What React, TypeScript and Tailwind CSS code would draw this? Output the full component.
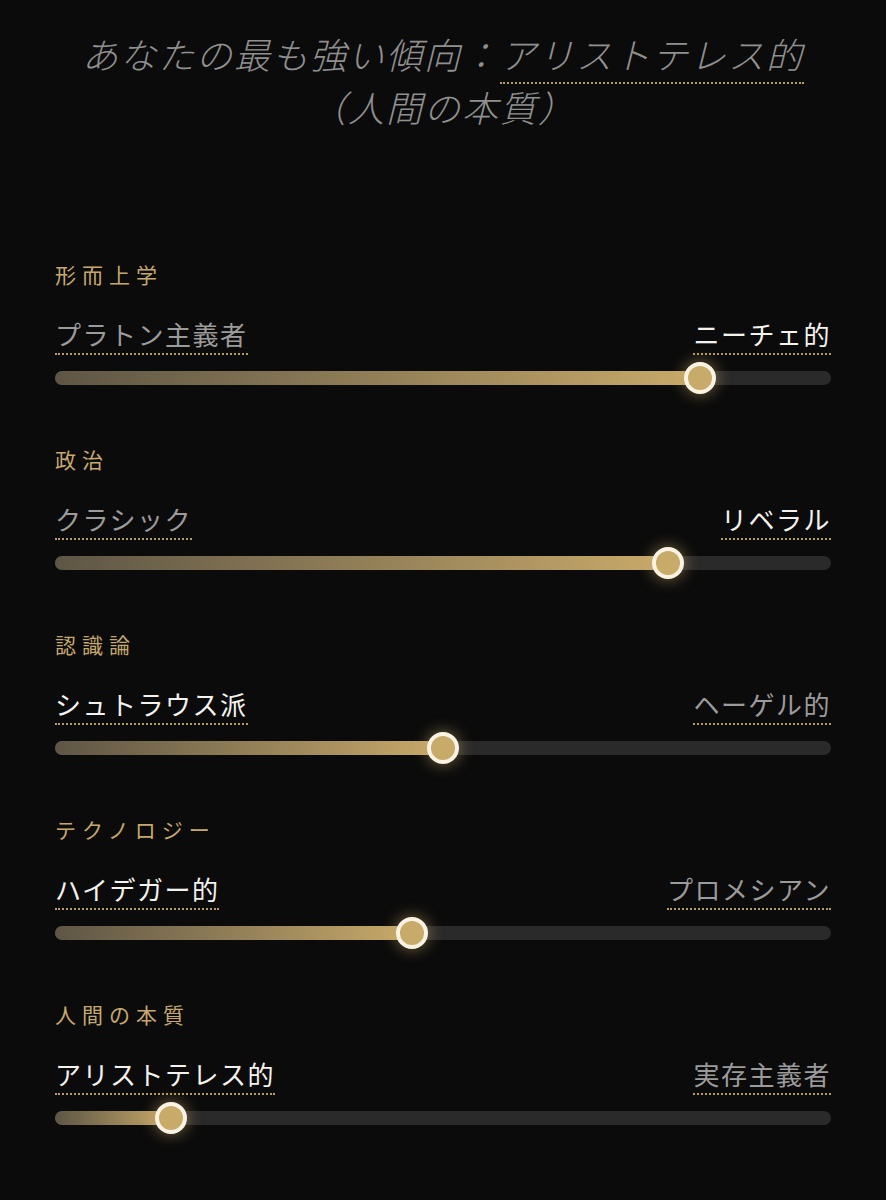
const font = "font-['Noto_Sans_CJK_JP','Noto_Sans',sans-serif]";

type Axis = {
  title: string;
  left: string;
  right: string;
  value: number;
};

const axes: Axis[] = [
  { title: "形而上学", left: "プラトン主義者", right: "ニーチェ的", value: 83.1 },
  { title: "政治", left: "クラシック", right: "リベラル", value: 79 },
  { title: "認識論", left: "シュトラウス派", right: "ヘーゲル的", value: 50 },
  { title: "テクノロジー", left: "ハイデガー的", right: "プロメシアン", value: 46 },
  { title: "人間の本質", left: "アリストテレス的", right: "実存主義者", value: 15 },
];

const Pole = ({ text, active }: { text: string; active: boolean }) => (
  <span
    className={`inline-block text-[26px] leading-[36px] tracking-[1.5px] pb-px border-b-2 border-dotted border-[#b89c63] ${
      active ? "text-[#f4f2ee]" : "text-[#9b9b9b]"
    }`}
  >
    {text}
  </span>
);

const AxisRow = ({ axis }: { axis: Axis }) => {
  // 50% and below leans to the left pole
  const leftActive = axis.value <= 50;
  return (
    <div className="flex flex-col">
      <div className="text-[21px] leading-[28px] tracking-[6px] text-[#c6a86f]">{axis.title}</div>
      <div className="mt-7 flex items-end justify-between">
        <Pole text={axis.left} active={leftActive} />
        <Pole text={axis.right} active={!leftActive} />
      </div>
      <div className="relative mt-4 h-[14px] rounded-full bg-[#2a2a2a]">
        <div
          className="absolute inset-y-0 left-0 rounded-full bg-gradient-to-r from-[#5e5645] to-[#c9aa69]"
          style={{ width: `${axis.value}%` }}
        />
        <div
          className="absolute top-1/2 h-[32px] w-[32px] -translate-x-1/2 -translate-y-1/2 rounded-full border-4 border-[#faf3e4] bg-[#c8aa69] shadow-[0_0_16px_rgba(201,170,105,0.6)]"
          style={{ left: `${axis.value}%` }}
        />
      </div>
    </div>
  );
};

export default function App() {
  return (
    <div className={`min-h-[1200px] w-full bg-[#0b0b0b] ${font}`}>
      <div className="px-[55px] pt-[27px]">
        <h1 className="text-center text-[36px] leading-[53px] font-light italic text-[#909090] tracking-[2px]">
          あなたの最も強い傾向：
          <span className="border-b-2 border-dotted border-[#b89c63] pb-[3px]">アリストテレス的</span>
          <br />
          （人間の本質）
        </h1>
        <div className="mt-[127px] flex flex-col gap-[60px]">
          {axes.map((a) => (
            <AxisRow key={a.title} axis={a} />
          ))}
        </div>
      </div>
    </div>
  );
}
